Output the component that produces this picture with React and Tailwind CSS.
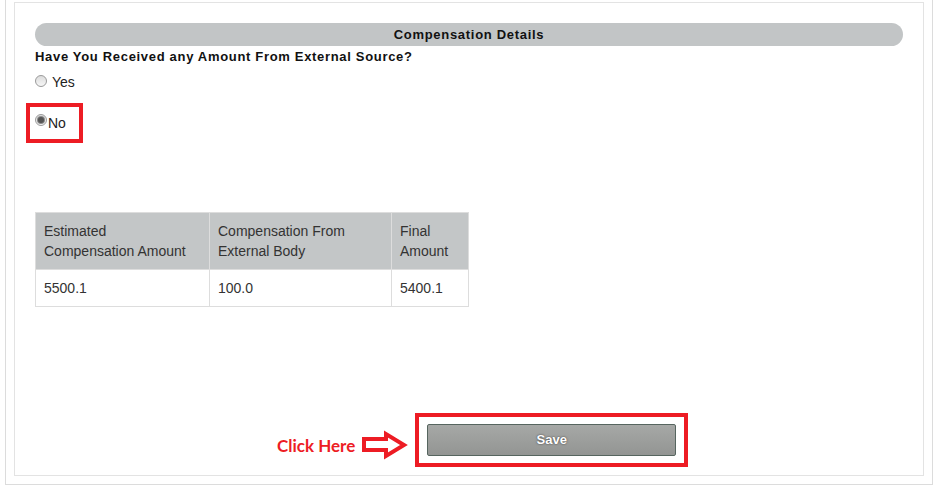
export default function App() {
  const Radio = ({ checked }) => (
    <span className="relative inline-flex h-[12px] w-[12px] shrink-0 items-center justify-center rounded-full border border-[#9a9a9a] bg-gradient-to-b from-[#dcdcdc] to-[#f7f7f7]">
      {checked && <span className="h-[6px] w-[6px] rounded-full bg-[#555] shadow-[0_0_0_1px_#8a8a8a]" />}
    </span>
  );
  return (
    <div className="h-[494px] w-[941px] bg-white font-['Liberation_Sans',Arial,sans-serif] text-[#111]">
      <div className="ml-[5px] w-[928px] border-x border-b border-[#dcdcdc] px-[8px] pt-[2px] pb-[8px]">
        <div className="h-[474px] border border-[#e3e3e3] pl-[20px] pr-[20px] pt-[20px]">
          <div className="flex h-[23px] items-center justify-center rounded-full bg-[#c2c5c6] text-[13px] font-bold tracking-[0.7px] text-[#111]">
            Compensation Details
          </div>
          <div className="mt-px text-[13px] font-bold leading-[20px] tracking-[0.68px] text-[#111]">
            Have You Received any Amount From External Source?
          </div>
          <div className="mt-[5px] flex h-[20px] items-center">
            <span><Radio /></span>
            <span className="ml-[5px] text-[14px] text-[#222]">Yes</span>
          </div>
          <div className="-ml-[9px] mt-[11px] flex h-[40px] w-[57px] items-center border-[4px] border-[#ed1c24] pl-[5px]">
            <span className="-mt-[10px]"><Radio checked /></span>
            <span className="ml-px text-[14px] text-[#222]">No</span>
          </div>
          <table className="mt-[69px] border-collapse text-[14px] leading-[20px] text-[#333]">
            <thead>
              <tr className="bg-[#c3c6c7]">
                <th className="w-[174px] border border-[#dddddd] p-[8px] text-left align-top font-normal">Estimated<br />Compensation Amount</th>
                <th className="w-[182px] border border-[#dddddd] p-[8px] text-left align-top font-normal">Compensation From<br />External Body</th>
                <th className="w-[77px] border border-[#dddddd] p-[8px] text-left align-top font-normal">Final<br />Amount</th>
              </tr>
            </thead>
            <tbody>
              <tr>
                <td className="border border-[#dddddd] p-[8px]">5500.1</td>
                <td className="border border-[#dddddd] p-[8px]">100.0</td>
                <td className="border border-[#dddddd] p-[8px]">5400.1</td>
              </tr>
            </tbody>
          </table>
          <div className="mt-[106px] flex items-center pl-[242px]">
            <span className="mt-[11px] font-['Lato',sans-serif] text-[17px] font-bold text-[#ed1c24]">Click Here</span>
            <svg width="46" height="31" viewBox="0 0 46 31" className="ml-[7px] mt-[10px]">
              <polygon points="2,9 24,9 24,4 42,15 24,26 24,20 2,20" fill="white" stroke="#ed1c24" strokeWidth="4" strokeLinejoin="miter" />
            </svg>
            <div className="ml-[7px] border-[4px] border-[#ed1c24] px-[8px] py-[7px]">
              <button className="flex h-[32px] w-[249px] items-center justify-center rounded-[2px] border border-[#56655f] bg-gradient-to-b from-[#a6a8a6] to-[#939593] text-[13px] font-bold text-white [text-shadow:0_0_2px_#333]">
                Save
              </button>
            </div>
          </div>
        </div>
      </div>
    </div>
  );
}
